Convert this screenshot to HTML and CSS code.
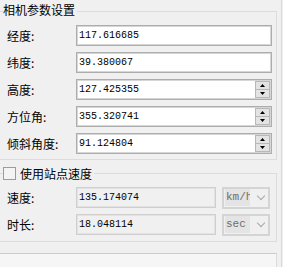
FILE: index.html
```html
<!DOCTYPE html>
<html>
<head>
	<title>相机参数设置</title>
	<link rel="stylesheet" href="styles.css">
</head>
<body>
	<div class="panel">
		<!-- camera parameters -->
		<fieldset class="group group-camera">
			<legend>相机参数设置</legend>
			<div class="row">
				<label>经度:</label>
				<div class="field"><span class="value">117.616685</span></div>
			</div>
			<div class="row">
				<label>纬度:</label>
				<div class="field"><span class="value">39.380067</span></div>
			</div>
			<div class="row">
				<label>高度:</label>
				<div class="field"><span class="value">127.425355</span>
					<div class="spin"><b class="up"></b><b class="down"></b></div>
				</div>
			</div>
			<div class="row">
				<label>方位角:</label>
				<div class="field"><span class="value">355.320741</span>
					<div class="spin"><b class="up"></b><b class="down"></b></div>
				</div>
			</div>
			<div class="row">
				<label>倾斜角度:</label>
				<div class="field"><span class="value">91.124804</span>
					<div class="spin"><b class="up"></b><b class="down"></b></div>
				</div>
			</div>
		</fieldset>
		<!-- station speed -->
		<fieldset class="group group-speed">
			<legend><span class="check"></span>使用站点速度</legend>
			<div class="row">
				<label>速度:</label>
				<div class="field field-off"><span class="value">135.174074</span></div>
				<div class="combo"><span class="combo-text">km/h</span><span class="chev"></span></div>
			</div>
			<div class="row">
				<label>时长:</label>
				<div class="field field-off"><span class="value">18.048114</span></div>
				<div class="combo"><span class="combo-text">sec</span><span class="chev"></span></div>
			</div>
		</fieldset>
		<div class="next"><span class="check"></span></div>
	</div>
</body>
</html>
```
FILE: styles.css
```css
body{
	margin: 0;
	font-family: "Noto Sans CJK SC", "Noto Sans", sans-serif;
	font-size: 12px;
	background-color: #f0f0f0;
	color: #000;
}
.panel{
	width: 281px;
	height: 267px;
	border-right: 1px solid #d9d9d9;
	overflow: hidden;
}
.group{
	width: 277px;
	box-sizing: border-box;
	margin: 0;
	padding: 3px 0 5px 7px;
	border: 1px solid #dcdcdc;
	border-left: none;
}
.group legend{
	margin-left: -4px;
	padding: 0 2px 0 0;
	line-height: 17px;
}
.group-camera{
	margin-top: 1px;
}
.group-camera legend{
	padding-bottom: 4px;
}
.group-speed{
	margin-top: 5px;
	padding-top: 5px;
	padding-bottom: 6px;
}
.group-speed legend{
	display: flex;
	align-items: center;
}
.row{
	display: flex;
	align-items: center;
	height: 21px;
	margin-bottom: 6px;
}
.row:last-child{
	margin-bottom: 0;
}
.row label{
	width: 69px;
	line-height: 17px;
}
.field{
	display: flex;
	align-items: stretch;
	width: 196px;
	height: 21px;
	box-sizing: border-box;
	border: 1px solid #adadad;
	box-shadow: inset 0 0 0 1px #d6d6d6;
	background-color: #fff;
	padding: 1px;
}
.value{
	flex: 1;
	font-family: "Liberation Mono", "DejaVu Sans Mono", monospace;
	font-size: 10px;
	line-height: 17px;
	padding-left: 1px;
}
.spin{
	display: flex;
	flex-direction: column;
	width: 15px;
}
.spin b{
	flex: 1;
	display: flex;
	align-items: center;
	justify-content: center;
	background-color: #e3e3e3;
	border: 1px solid #b8b8b8;
}
.spin b + b{
	border-top: none;
}
.spin b::before{
	content: "";
	width: 5px;
	height: 3px;
	background-color: #000;
}
.spin .up::before{
	clip-path: polygon(50% 0, 100% 100%, 0 100%);
}
.spin .down::before{
	clip-path: polygon(0 0, 100% 0, 50% 100%);
}
.field-off{
	width: 140px;
	background-color: #f0f0f0;
	border-color: #cfcfcf;
	box-shadow: inset 0 0 0 1px #e2e2e2;
}
.combo{
	display: flex;
	align-items: center;
	width: 48px;
	height: 22px;
	box-sizing: border-box;
	margin-left: 6px;
	border: 2px solid #d4d4d4;
	padding-left: 1px;
}
.combo-text{
	width: 25px;
	height: 17px;
	overflow: hidden;
	white-space: nowrap;
	background-color: #e4e4e4;
	color: #6d6d6d;
	font-family: "Liberation Mono", "DejaVu Sans Mono", monospace;
	font-size: 11px;
	line-height: 17px;
	padding-left: 1px;
	box-sizing: border-box;
}
.chev{
	width: 5px;
	height: 5px;
	margin-left: 8px;
	margin-top: -4px;
	border-right: 1px solid #a8a8a8;
	border-bottom: 1px solid #a8a8a8;
	transform: rotate(45deg);
}
.check{
	display: inline-block;
	width: 13px;
	height: 13px;
	box-sizing: border-box;
	border: 1px solid #9c9c9c;
	background-color: #f4f4f4;
	margin-right: 4px;
}
.next{
	width: 277px;
	height: 40px;
	box-sizing: border-box;
	margin-top: 11px;
	border-top: 1px solid #cbcbcb;
	border-right: 1px solid #dcdcdc;
	background-color: #f6f6f6;
	padding: 12px 0 0 5px;
}
.next .check{
	width: 11px;
	height: 11px;
	border-color: #c4c4c4;
	background-color: #fff;
}
```
